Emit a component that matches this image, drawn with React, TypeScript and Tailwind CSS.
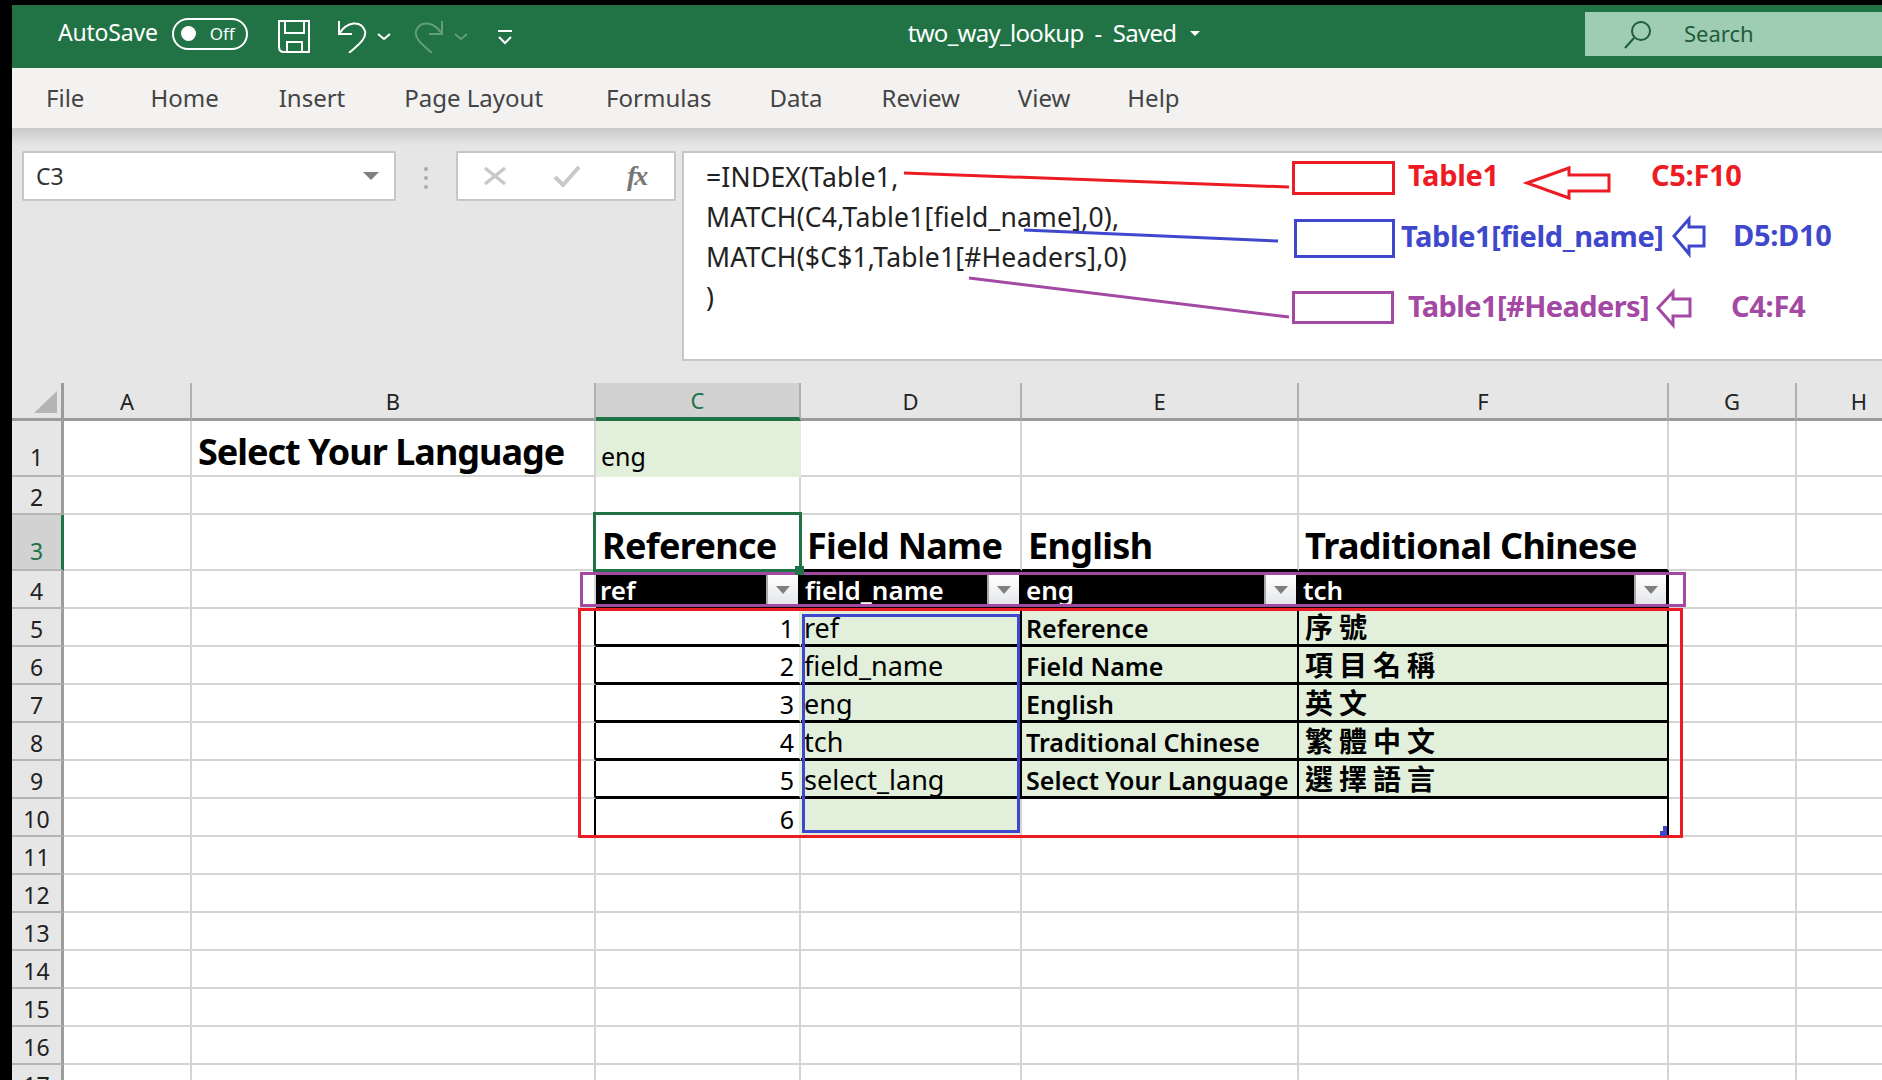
import React from 'react';

const GRID = 'border-r-2 border-b-2 border-[#d4d4d4]';
const BLACK = 'border-r-2 border-b-[3px] border-black';
const GREEN = 'bg-[#e2efda]';
const cols = ['A', 'B', 'C', 'D', 'E', 'F', 'G', 'H'];
const tabs = [
  { label: 'File', cls: 'ml-[34px]' },
  { label: 'Home', cls: 'ml-[66px]' },
  { label: 'Insert', cls: 'ml-[60px]' },
  { label: 'Page Layout', cls: 'ml-[59px]' },
  { label: 'Formulas', cls: 'ml-[63px]' },
  { label: 'Data', cls: 'ml-[58px]' },
  { label: 'Review', cls: 'ml-[59px]' },
  { label: 'View', cls: 'ml-[58px]' },
  { label: 'Help', cls: 'ml-[57px]' },
];

const lookup = [
  ['1', 'ref', 'Reference', '序號'],
  ['2', 'field_name', 'Field Name', '項目名稱'],
  ['3', 'eng', 'English', '英文'],
  ['4', 'tch', 'Traditional Chinese', '繁體中文'],
  ['5', 'select_lang', 'Select Your Language', '選擇語言'],
];

const Cell: React.FC<{ className?: string; children?: React.ReactNode }> = ({ className = GRID, children }) => (
  <div className={`flex items-end whitespace-nowrap min-w-0 ${className}`}>{children}</div>
);

const FilterButton = () => (
  <div className="w-[32px] h-[30px] shrink-0 flex items-center justify-center bg-gradient-to-b from-white to-[#e4e6ea] border-l-2 border-[#a8a8a8]">
    <div className="w-0 h-0 border-x-[7px] border-x-transparent border-t-[8px] border-t-[#7f7f7f]" />
  </div>
);

const RowHeader: React.FC<{ n: number; active?: boolean; tall?: boolean }> = ({ n, active, tall }) => (
  <div
    className={`flex items-end justify-center text-[23px] leading-[30px] border-b-2 border-b-[#b5b5b5] border-r-[3px] ${tall ? 'pb-[3px]' : 'pb-[1px]'} ${
      active ? 'bg-[#d2d2d2] border-r-[#217346] text-[#217346]' : 'bg-[#e6e6e6] border-r-[#9c9c9c] text-[#222]'
    }`}
  >
    {n}
  </div>
);

const Blank = () => <Cell />;

const Sheet = () => {
  const rows: React.ReactNode[] = [];

  rows.push(
    <React.Fragment key="r1">
      <RowHeader n={1} tall />
      <Blank />
      <Cell className={`${GRID} pl-[6px] text-[36px] leading-[46px] font-bold tracking-[-1px] text-black`}>Select Your Language</Cell>
      <Cell className={`${GREEN} border-r-2 border-r-[#e2efda] border-b-2 border-b-[#e2efda] pl-[5px] pb-[2px] text-[25px] leading-[34px] text-black`}>eng</Cell>
      <Blank /><Blank /><Blank /><Blank /><Blank />
    </React.Fragment>
  );

  rows.push(
    <React.Fragment key="r2">
      <RowHeader n={2} />
      <Blank /><Blank /><Blank /><Blank /><Blank /><Blank /><Blank /><Blank />
    </React.Fragment>
  );

  const headings = ['Reference', 'Field Name', 'English', 'Traditional Chinese'];
  rows.push(
    <React.Fragment key="r3">
      <RowHeader n={3} active tall />
      <Blank /><Blank />
      {headings.map(h => (
        <Cell key={h} className="border-r-2 border-r-[#d4d4d4] border-b-2 border-b-black pl-[6px] text-[36px] leading-[46px] font-bold tracking-[-0.7px] text-black">
          {h}
        </Cell>
      ))}
      <Blank /><Blank />
    </React.Fragment>
  );

  const fields = ['ref', 'field_name', 'eng', 'tch'];
  rows.push(
    <React.Fragment key="r4">
      <RowHeader n={4} />
      <Blank /><Blank />
      {fields.map(f => (
        <div key={f} className="bg-black flex items-center justify-between pl-[4px] pr-[3px] text-white text-[26px] leading-[32px] font-semibold">
          <span>{f}</span>
          <FilterButton />
        </div>
      ))}
      <Blank /><Blank />
    </React.Fragment>
  );

  lookup.forEach((r, i) => {
    rows.push(
      <React.Fragment key={r[0]}>
        <RowHeader n={5 + i} />
        <Blank />
        <Cell className="border-r-2 border-r-black border-b-2 border-b-[#d4d4d4]" />
        <Cell className="bg-white border-r-2 border-r-[#e2efda] border-b-[3px] border-b-black justify-end pr-[5px] text-[25px] leading-[32px] text-black">{r[0]}</Cell>
        <Cell className={`${GREEN} ${BLACK} pl-[3px] text-[27px] leading-[32px] text-black`}>{r[1]}</Cell>
        <Cell className={`${GREEN} ${BLACK} pl-[4px] text-[25px] leading-[32px] font-semibold text-black`}>{r[2]}</Cell>
        <Cell className={`${GREEN} ${BLACK} pl-[6px] text-[28px] leading-[34px] font-bold tracking-[6px] text-black`}>{r[3]}</Cell>
        <Blank /><Blank />
      </React.Fragment>
    );
  });

  rows.push(
    <React.Fragment key="r10">
      <RowHeader n={10} />
      <Blank />
      <Cell className="border-r-2 border-r-black border-b-2 border-b-[#d4d4d4]" />
      <Cell className="border-r-2 border-r-[#e2efda] border-b-2 border-b-[#d4d4d4] justify-end pr-[5px] text-[25px] leading-[32px] text-black">6</Cell>
      <Cell className={`${GREEN} border-r-2 border-r-[#d4d4d4] border-b-2 border-b-[#d4d4d4]`} />
      <Blank />
      <Cell className="border-r-2 border-r-black border-b-2 border-b-[#d4d4d4]" />
      <Blank /><Blank />
    </React.Fragment>
  );

  for (let n = 11; n <= 17; n++) {
    rows.push(
      <React.Fragment key={n}>
        <RowHeader n={n} />
        <Blank /><Blank /><Blank /><Blank /><Blank /><Blank /><Blank /><Blank />
      </React.Fragment>
    );
  }

  return (
    <div className="bg-white grid grid-cols-[52px_128px_404px_205px_221px_277px_370px_128px_126px] grid-rows-[38px_56px_38px_56px_38px_38px_38px_38px_38px_38px_38px_38px_38px_38px_38px_38px_38px_38px]">
      <div className="bg-[#e6e6e6] border-r-[3px] border-r-[#9c9c9c] border-b-[3px] border-b-[#9c9c9c] flex items-end justify-end pr-[4px] pb-[5px]">
        <div className="w-0 h-0 border-l-[23px] border-l-transparent border-b-[22px] border-b-[#b4b4b4]" />
      </div>
      {cols.map(c => (
        <div
          key={c}
          className={
            c === 'C'
              ? 'bg-[#d2d2d2] border-r-2 border-r-[#b0b0b0] border-b-[4px] border-b-[#217346] flex items-center justify-center text-[22px] leading-none text-[#217346]'
              : 'bg-[#e6e6e6] border-r-2 border-r-[#b0b0b0] border-b-[3px] border-b-[#9c9c9c] flex items-center justify-center text-[22px] leading-none text-[#222]'
          }
        >
          {c}
        </div>
      ))}
      {rows}
    </div>
  );
};

const Annotations = () => (
  <svg className="absolute inset-0 pointer-events-none" width="1882" height="1080" viewBox="0 0 1882 1080" fill="none">
    <g stroke="#ed1c24" strokeWidth="3">
      <path d="M904 173 L1289 187" />
      <rect x="1293.5" y="162.5" width="100" height="31" />
      <path d="M1527 183 L1569 168 V175 H1609 V191 H1569 V198 Z" />
      <rect x="579.5" y="609.5" width="1102" height="227" />
    </g>
    <g stroke="#3f48cc" strokeWidth="3">
      <path d="M1024 230 L1278 241" />
      <rect x="1295.5" y="220.5" width="98" height="36" />
      <path d="M1674 236 L1689 219 V227 H1704 V246 H1689 V254 Z" />
      <rect x="803.5" y="615.5" width="215" height="216" />
    </g>
    <g stroke="#a349a4" strokeWidth="3">
      <path d="M969 278 L1289 317" />
      <rect x="1293.5" y="292.5" width="99" height="30" />
      <path d="M1658 308 L1673 292 V299 H1690 V316 H1673 V325 Z" />
      <rect x="581.5" y="573.5" width="1103" height="32" />
    </g>
    <rect x="594.5" y="513.5" width="206" height="57" stroke="#217346" strokeWidth="3" />
    <rect x="795" y="566" width="9" height="9" fill="#217346" />
    <path d="M1667 826 V836 H1660 V831 H1663 V826 Z" fill="#3f48cc" />
  </svg>
);

export default function App() {
  return (
    <div className="relative w-[1882px] h-[1080px] overflow-hidden bg-black pl-[12px] pt-[5px] font-['Noto_Sans','Noto_Sans_CJK_TC',sans-serif]">
      <div className="h-[63px] bg-[#217346] flex items-center text-white relative">
        <span className="ml-[46px] pb-[8px] text-[23px] leading-none tracking-[-0.2px]">AutoSave</span>
        <div className="ml-[14px] -mt-[6px] w-[76px] h-[32px] rounded-full border-2 border-white flex items-center pl-[7px]">
          <div className="w-[15px] h-[15px] rounded-full bg-white" />
          <span className="ml-[14px] text-[17px] leading-none">Off</span>
        </div>
        <svg className="ml-[30px]" width="32" height="33" viewBox="0 0 32 33" fill="none" stroke="white" strokeWidth="2">
          <path d="M1 1 H31 V32 H6 Q1 32 1 27 Z" />
          <path d="M7 1 V13 H26 V1" />
          <path d="M9 32 V22 H24 V32" />
        </svg>
        <svg className="ml-[27px]" width="30" height="33" viewBox="0 0 30 33" fill="none" stroke="white" strokeWidth="2">
          <path d="M2 1 V14 H15" />
          <path d="M2 14 C10 1 24 0 28 11 C30 19 20 26 12 33" />
        </svg>
        <svg className="ml-[10px]" width="14" height="8" viewBox="0 0 14 8" fill="none" stroke="white" strokeWidth="2">
          <path d="M1 1 L7 6 L13 1" />
        </svg>
        <svg className="ml-[23px] opacity-30" width="30" height="33" viewBox="0 0 30 33" fill="none" stroke="white" strokeWidth="2">
          <path d="M28 1 V14 H15" />
          <path d="M28 14 C20 1 6 0 2 11 C0 19 10 26 18 33" />
        </svg>
        <svg className="ml-[10px] opacity-30" width="14" height="8" viewBox="0 0 14 8" fill="none" stroke="white" strokeWidth="2">
          <path d="M1 1 L7 6 L13 1" />
        </svg>
        <svg className="ml-[29px]" width="16" height="16" viewBox="0 0 16 16" fill="none" stroke="white" strokeWidth="2">
          <path d="M1 2 H15" />
          <path d="M2 8 L8 14 L14 8" />
        </svg>
        <span className="ml-[395px] pb-[8px] text-[24px] leading-none tracking-[-0.7px] whitespace-pre">two_way_lookup  -  Saved</span>
        <div className="ml-[14px] -mt-[6px] w-0 h-0 border-x-[5px] border-x-transparent border-t-[5px] border-t-white" />
        <div className="absolute left-[1573px] right-0 top-[7px] h-[44px] bg-[#9fcdb3] flex items-center text-[#1e5c3a]">
          <svg className="ml-[39px]" width="28" height="29" viewBox="0 0 28 29" fill="none" stroke="#1e5c3a" strokeWidth="2">
            <circle cx="17" cy="11" r="9" />
            <path d="M10 18 L1 28" />
          </svg>
          <span className="ml-[32px] pb-[2px] text-[22px] leading-none">Search</span>
        </div>
      </div>

      <div className="h-[60px] bg-[#f3f2f1] flex items-center text-[24px] leading-none text-[#444]">
        {tabs.map(t => (
          <span key={t.label} className={t.cls}>{t.label}</span>
        ))}
      </div>

      <div className="h-[255px] pt-[23px] pl-[10px] flex items-start bg-[linear-gradient(#c9c9c9,#e6e6e6_18px)]">
        <div className="w-[374px] h-[50px] bg-white border-2 border-[#c6c6c6] rounded-[2px] flex items-center justify-between pl-[12px] pr-[15px] text-[23px] text-[#333]">
          <span>C3</span>
          <div className="w-0 h-0 border-x-[8px] border-x-transparent border-t-[8px] border-t-[#808080]" />
        </div>
        <div className="ml-[28px] mt-[16px] flex flex-col gap-[5px]">
          <div className="w-[4px] h-[4px] rounded-full bg-[#aaa]" />
          <div className="w-[4px] h-[4px] rounded-full bg-[#aaa]" />
          <div className="w-[4px] h-[4px] rounded-full bg-[#aaa]" />
        </div>
        <div className="ml-[28px] w-[220px] h-[50px] bg-white border-2 border-[#c6c6c6] rounded-[2px] flex items-center">
          <svg className="ml-[25px]" width="24" height="20" viewBox="0 0 24 20" fill="none" stroke="#c8c8c8" strokeWidth="3.5">
            <path d="M2 2 L22 18 M22 2 L2 18" />
          </svg>
          <svg className="ml-[46px]" width="28" height="22" viewBox="0 0 28 22" fill="none" stroke="#c8c8c8" strokeWidth="4">
            <path d="M2 12 L10 20 L26 2" />
          </svg>
          <span className="ml-[46px] font-['Liberation_Serif',serif] italic font-bold text-[28px] leading-none tracking-[-2px] text-[#777]">fx</span>
        </div>
        <div className="ml-[6px] flex-1 h-[210px] bg-white border-2 border-r-0 border-[#c6c6c6] pl-[22px] pt-[4px] text-[26.5px] leading-[40px] text-[#222] tracking-[0.2px]">
          <div>=INDEX(Table1,</div>
          <div>MATCH(C4,Table1[field_name],0),</div>
          <div>MATCH($C$1,Table1[#Headers],0)</div>
          <div>)</div>
        </div>
      </div>

      <Sheet />
      <Annotations />

      <span className="absolute left-[1408px] top-[157px] text-[29px] leading-[36px] font-bold tracking-[-0.3px] text-[#ed1c24]">Table1</span>
      <span className="absolute left-[1651px] top-[157px] text-[29px] leading-[36px] font-bold tracking-[-0.3px] text-[#ed1c24]">C5:F10</span>
      <span className="absolute left-[1401px] top-[218px] text-[29px] leading-[36px] font-bold tracking-[-0.4px] text-[#3f48cc]">Table1[field_name]</span>
      <span className="absolute left-[1733px] top-[217px] text-[29px] leading-[36px] font-bold tracking-[-0.3px] text-[#3f48cc]">D5:D10</span>
      <span className="absolute left-[1408px] top-[288px] text-[29px] leading-[36px] font-bold tracking-[-0.6px] text-[#a349a4]">Table1[#Headers]</span>
      <span className="absolute left-[1731px] top-[288px] text-[29px] leading-[36px] font-bold tracking-[-0.3px] text-[#a349a4]">C4:F4</span>
    </div>
  );
}
